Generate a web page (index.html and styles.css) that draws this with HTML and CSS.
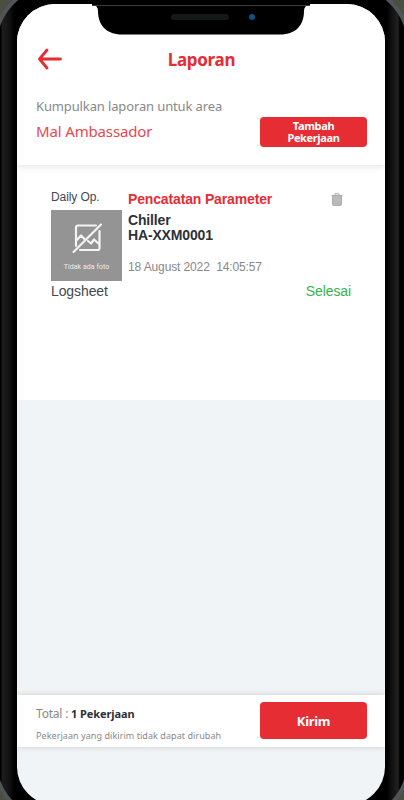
FILE: index.html
```
<!DOCTYPE html>
<html lang="id">
<head>
<meta charset="utf-8">
<title>Laporan</title>
<link rel="stylesheet" href="styles.css">
</head>
<body>
<div class="phone">
  <main class="screen">
    <header class="header">
      <div class="titlebar">
        <svg class="back" width="24" height="22" viewBox="0 0 24 22"><path d="M9 2 1.500 11 9 20M2 11H22.500" /></svg>
        <h1 class="title">Laporan</h1>
      </div>
      <p class="caption">Kumpulkan laporan untuk area</p>
      <div class="area">
        <p class="area-name">Mal Ambassador</p>
        <button class="btn add">Tambah<br>Pekerjaan</button>
      </div>
    </header>
    <section class="list">
      <article class="job">
        <div class="left">
          <p class="kind">Daily Op.</p>
          <div class="photo">
            <svg width="32" height="32" viewBox="0 0 32 32"><path d="M25 3.500H7q-2 0-2 2V24M28.500 9V26q0 2-2 2H9M5 19L10 13.500 13.500 17M17 19L20 21.500 23 17.500 28 22M2.500 30L30 2.500"/></svg>
            <span>Tidak ada foto</span>
          </div>
          <p class="sheet">Logsheet</p>
        </div>
        <div class="info">
          <div class="job-head">
            <h2>Pencatatan Parameter</h2>
            <svg class="trash" width="12" height="13" viewBox="0 0 12 13"><path class="fill" d="M1.500 3h9v8.500q0 1-1 1h-7q-1 0-1-1z"/><path d="M.5 2.500h11M4 2V.8h4V2M1.600 3v8.500q0 .9.900.9h7q.9 0 .9-.9V3"/></svg>
          </div>
          <p class="asset">Chiller<br>HA-XXM0001</p>
          <p class="date">18 August 2022&nbsp; 14:05:57</p>
          <p class="status">Selesai</p>
        </div>
      </article>
    </section>
    <footer class="footer">
      <div>
        <p class="total">Total : <b>1 Pekerjaan</b></p>
        <p class="note">Pekerjaan yang dikirim tidak dapat dirubah</p>
      </div>
      <button class="btn send">Kirim</button>
    </footer>
  </main>
  <svg class="notch" width="218" height="32" viewBox="0 0 218 32"><path d="M0 0H218V4Q212 4 212 10C212 24 204 33.500 188 33.500H30C14 33.500 6 24 6 10Q6 4 0 4z"/><path d="M0 4.500H218" stroke="#3c3c3c"/><rect x="79" y="13" width="58" height="6" rx="3" fill="#151818"/><circle cx="160" cy="16" r="3" fill="#0d5282"/></svg>
</div>
</body>
</html>
```
FILE: styles.css
```
* { box-sizing: border-box; }
html { height: 800px; overflow: hidden; }
body { margin: 0; height: 800px; background: #4b4f42; overflow: hidden; }
h1, h2, p { margin: 0; }
.phone {
  position: relative;
  width: 410px;
  height: 832px;
  margin: -13px -3px 0;
  padding: 17px 22px 14px 20px;
  border-radius: 58px;
  background: linear-gradient(90deg, #000 4px, #1c1c1c 5px, #171717 10px, #020202 17px, #000 20px, #000 390px, #121212 395px, #202020 401px, #000 403px);
  box-shadow: 0 0 0 4px #50555a;
  font-family: "Noto Sans", sans-serif;
}
.screen {
  display: flex;
  flex-direction: column;
  width: 368px;
  height: 801px;
  border-radius: 38px;
  overflow: hidden;
  background: #f0f4f7;
}
.header {
  position: relative;
  height: 161px;
  padding: 42px 18px 0 19px;
  background: #fff;
  box-shadow: 0 1px 7px rgba(0, 0, 0, .13);
}
.titlebar {
  display: grid;
  grid-template-columns: 28px 1fr 28px;
  align-items: center;
  height: 24px;
}
.back {
  margin-left: 2px;
  fill: none;
  stroke: #e52d34;
  stroke-width: 2.800;
  stroke-linecap: round;
  stroke-linejoin: round;
}
.title { margin-top: 2px; color: #e52d34; font-size: 17px; line-height: 24px; letter-spacing: -.3px; text-align: center; }
.caption { margin-top: 26px; color: #888; font-size: 13px; line-height: 20px; letter-spacing: -.13px; }
.area { display: flex; justify-content: space-between; margin-top: 1px; }
.area-name { margin-top: 3px; color: #e84850; font-size: 15px; line-height: 22px; letter-spacing: -.15px; }
.btn {
  width: 107px;
  padding: 0;
  border: 0;
  border-radius: 4px;
  background: #e52d33;
  color: #fff;
  font-family: "Noto Sans", sans-serif;
  font-weight: 700;
}
.add { height: 30px; font-size: 11px; line-height: 12px; letter-spacing: -.35px; }
.list { height: 235px; padding: 24px 34px; background: #fff; font-family: "Liberation Sans", sans-serif; }
.job { display: flex; gap: 6px; }
.left { width: 71px; color: #444950; }
.kind { font-size: 12px; line-height: 16px; letter-spacing: -.1px; }
.photo {
  display: flex;
  flex-direction: column;
  align-items: center;
  width: 71px;
  height: 71px;
  margin-top: 5px;
  padding-top: 12px;
  background: #949494;
  color: #eee;
  font: 7px/10px Roboto, sans-serif;
}
.photo svg { fill: none; stroke: #f3f3f3; stroke-width: 2.200; stroke-linecap: round; stroke-linejoin: round; }
.photo span { margin-top: 8px; letter-spacing: .05px; }
.sheet { margin-top: 1px; font-size: 14px; line-height: 18px; letter-spacing: -.1px; }
.info { flex: 1; }
.job-head { display: flex; justify-content: space-between; padding: 2px 8px 0 0; }
h2 { color: #e52d34; font-size: 14px; line-height: 16px; letter-spacing: -.15px; white-space: nowrap; }
.trash { margin-top: 2px; fill: none; stroke: #aaa; }
.trash .fill { fill: #bbb; stroke: none; }
.asset { margin-top: 6px; color: #2d3138; font-size: 14px; font-weight: 700; line-height: 15px; letter-spacing: -.15px; }
.date { margin-top: 16px; color: #888; font-size: 12px; line-height: 16px; letter-spacing: -.12px; }
.status { margin-top: 7px; color: #36b34f; font-size: 14px; line-height: 18px; letter-spacing: -.1px; text-align: right; }
.footer {
  display: flex;
  justify-content: space-between;
  height: 52px;
  margin-top: 295px;
  padding: 7px 18px 0 19px;
  background: #fff;
  box-shadow: 0 0 6px rgba(0, 0, 0, .16);
}
.total { margin-top: 3px; color: #888; font-size: 12px; line-height: 18px; letter-spacing: -.2px; }
.total b { color: #2d3138; font-size: 11px; letter-spacing: -.1px; }
.note { margin-top: 6px; color: #888; font-size: 9px; line-height: 14px; letter-spacing: .06px; }
.send { height: 37px; font-size: 13px; letter-spacing: -.3px; }
.notch { position: absolute; top: 13px; left: 95px; height: 34px; overflow: visible; }
```
